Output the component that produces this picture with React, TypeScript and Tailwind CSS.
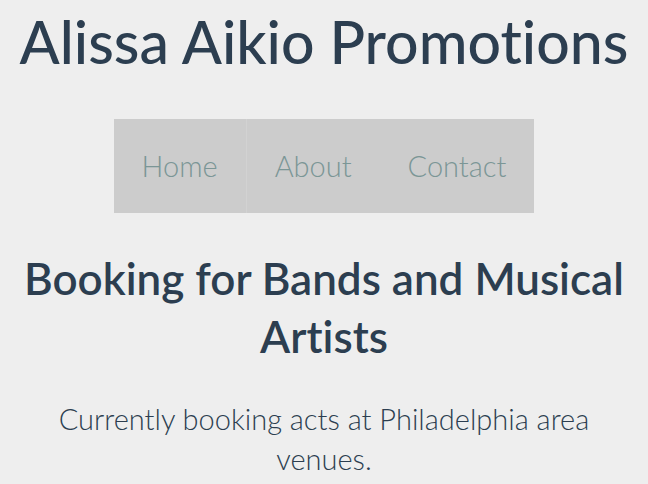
const LINKS = ['Home', 'About', 'Contact'];

export default function App() {
  return (
    <div className="min-h-screen bg-[#eeeeee] text-[#2c3e50] text-center font-['Lato','Noto_Sans',sans-serif] [font-variant-ligatures:none]">
      <h1 className="pt-[8px] text-[59px] leading-[68px] font-medium">Alissa Aikio Promotions</h1>

      <nav className="mt-[43px] flex justify-center">
        <ul className="flex bg-[#cccccc]">
          {LINKS.map((label, i) => (
            <li key={label} className={i === 0 ? 'border-r border-[#d2d2d2]' : ''}>
              <a href="#" className="block px-[28px] py-[31px] text-[29px] leading-[32px] font-light text-[#7b9696]">
                {label}
              </a>
            </li>
          ))}
        </ul>
      </nav>

      <h2 className="mt-[36px] px-4 text-[44px] leading-[58px] font-semibold">Booking for Bands and Musical Artists</h2>

      <p className="mt-[34px] px-12 text-[29px] leading-[40px] font-light">
        Currently booking acts at Philadelphia area venues.
      </p>
    </div>
  );
}
